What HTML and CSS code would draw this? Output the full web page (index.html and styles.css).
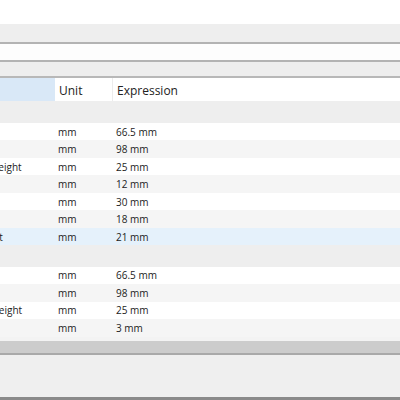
FILE: index.html
```html
<!DOCTYPE html>
<html lang="en">
<head>
  <meta charset="UTF-8" />
  <title>Parameters</title>
  <link rel="stylesheet" href="styles.css">
</head>
<body>
  <div class="top-space"></div>
  <div class="toolbar"></div>
  <div class="filter"></div>
  <div class="tabs"></div>

  <div class="table-view">
    <div class="table">
      <div class="row head">
        <div class="cell name selected"></div>
        <div class="cell">Unit</div>
        <div class="cell">Expression</div>
      </div>

      <!-- Cabinet -->
      <div class="row group">
        <div class="cell name">Cabinet</div>
        <div class="cell"></div>
        <div class="cell"></div>
      </div>
      <div class="row">
        <div class="cell name">Width</div>
        <div class="cell">mm</div>
        <div class="cell">66.5 mm</div>
      </div>
      <div class="row alt">
        <div class="cell name">Depth</div>
        <div class="cell">mm</div>
        <div class="cell">98 mm</div>
      </div>
      <div class="row">
        <div class="cell name">Drawer Height</div>
        <div class="cell">mm</div>
        <div class="cell">25 mm</div>
      </div>
      <div class="row alt">
        <div class="cell name">Gap</div>
        <div class="cell">mm</div>
        <div class="cell">12 mm</div>
      </div>
      <div class="row">
        <div class="cell name">Margin</div>
        <div class="cell">mm</div>
        <div class="cell">30 mm</div>
      </div>
      <div class="row alt">
        <div class="cell name">Inset</div>
        <div class="cell">mm</div>
        <div class="cell">18 mm</div>
      </div>
      <div class="row current">
        <div class="cell name">Top Offset</div>
        <div class="cell">mm</div>
        <div class="cell">21 mm</div>
      </div>

      <!-- Drawer -->
      <div class="row group">
        <div class="cell name">Drawer</div>
        <div class="cell"></div>
        <div class="cell"></div>
      </div>
      <div class="row">
        <div class="cell name">Width</div>
        <div class="cell">mm</div>
        <div class="cell">66.5 mm</div>
      </div>
      <div class="row alt">
        <div class="cell name">Depth</div>
        <div class="cell">mm</div>
        <div class="cell">98 mm</div>
      </div>
      <div class="row">
        <div class="cell name">Bottom Height</div>
        <div class="cell">mm</div>
        <div class="cell">25 mm</div>
      </div>
      <div class="row alt">
        <div class="cell name">Wall</div>
        <div class="cell">mm</div>
        <div class="cell">3 mm</div>
      </div>
    </div>
  </div>

  <div class="hscroll"></div>
  <div class="bottom-panel"></div>
  <div class="status"></div>
</body>
</html>
```

FILE: styles.css
```css
body {
  margin: 0;
  height: 400px;
  overflow: hidden;
  background: #ffffff;
  font-family: 'Open Sans', 'Noto Sans', sans-serif;
  color: #222;
}
.top-space {
  height: 24px;
}
.toolbar {
  height: 18px;
  background: #eeeeee;
  border-bottom: 2px solid #b3b3b3;
}
.filter {
  height: 16px;
  background: #fdfdfd;
  border-bottom: 2px solid #b3b3b3;
}
.tabs {
  height: 14px;
  background: #eeeeee;
  border-bottom: 2px solid #b8b8b8;
}
.table-view {
  overflow: hidden;
  border-bottom: 4px solid #f3f3f3;
}
.table {
  margin-left: -47px;
}
.row {
  display: grid;
  grid-template-columns: 102px 58px 1fr;
  height: 17.5px;
  align-items: center;
  font-size: 10px;
  background: #ffffff;
}
.row.alt {
  background: #f5f5f5;
}
.row.current {
  background: #e5f1fb;
}
.row.group {
  height: 21.4px;
  background: #eeeeee;
}
.row.group .cell {
  color: transparent;
}
.cell {
  padding-left: 3px;
  white-space: nowrap;
  overflow: hidden;
  line-height: 18px;
}
.cell.name {
  padding-left: 1px;
}
.row.head {
  height: 23.4px;
  font-size: 12px;
  color: #222;
  align-items: stretch;
}
.row.head .cell {
  line-height: 25px;
  padding-left: 4px;
  border-right: 1px solid #ececec;
}
.row.head .cell.selected {
  background: #d9e8f7;
  border-right: none;
}
.row.head .cell:last-child {
  border-right: none;
}
.hscroll {
  height: 12.6px;
  background: #cccccc;
  border-bottom: 2px solid #a9a9a9;
}
.bottom-panel {
  height: 42px;
  background: #efefef;
}
.status {
  height: 4px;
  background: #8a8a8a;
}
```
